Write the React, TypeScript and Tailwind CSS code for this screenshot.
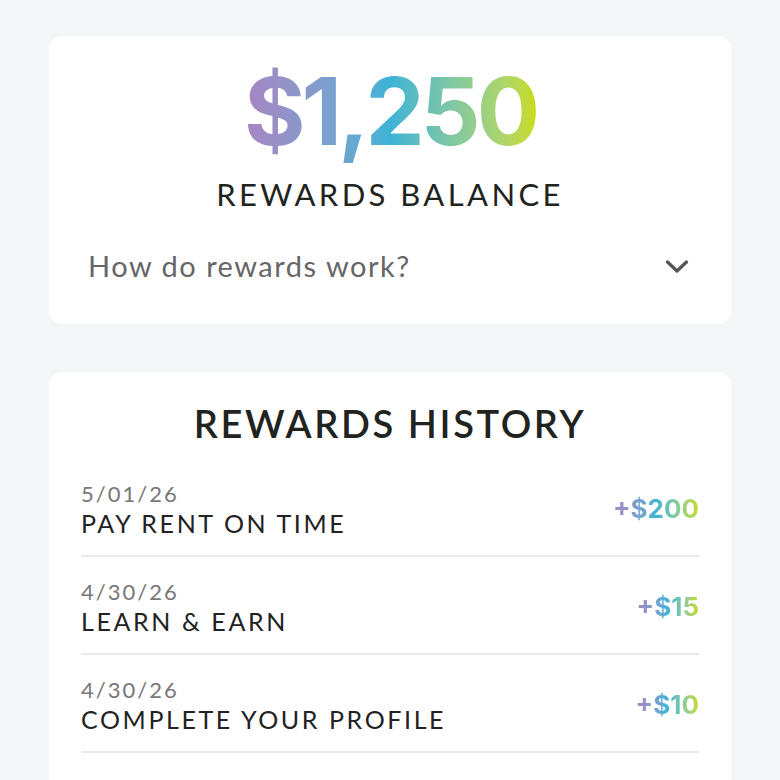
const history = [
  { date: "5/01/26", title: "PAY RENT ON TIME", amount: "+$200" },
  { date: "4/30/26", title: "LEARN & EARN", amount: "+$15" },
  { date: "4/30/26", title: "COMPLETE YOUR PROFILE", amount: "+$10" },
  { date: "4/30/26", title: "LINK YOUR BANK", amount: "+$25" },
];

const gradientText =
  "bg-gradient-to-r from-[#a684c2] via-[#3db3d6] to-[#c8dc0e] bg-clip-text text-transparent";

function Chevron() {
  return (
    <svg width="24" height="14" viewBox="0 0 24 14" fill="none" stroke="#555" strokeWidth="3.2" strokeLinecap="round" strokeLinejoin="round">
      <polyline points="2.5,2 12,11 21.5,2" />
    </svg>
  );
}

export default function App() {
  return (
    <div className="min-h-screen bg-[#f5f6f8] px-[49px] pt-9 font-['Lato',sans-serif]">
      {/* Balance card */}
      <section className="rounded-[13px] bg-white px-[39px] pb-[40px] pt-[24px]">
        <div className="flex justify-center">
          <span
            className={`${gradientText} font-['Inter',sans-serif] text-[94px] font-bold leading-[1.1] tracking-[-4px]`}
          >
            $1,250
          </span>
        </div>
        <h2 className="mt-[12px] text-center text-[31px] leading-tight tracking-[3.4px] text-[#1f2420]">
          REWARDS BALANCE
        </h2>
        <button className="mt-[34px] flex w-full items-center justify-between text-left">
          <span className="text-[29px] leading-[36px] tracking-[1.5px] text-[#666]">How do rewards work?</span>
          <span className="mr-[3px] mt-[2px]">
            <Chevron />
          </span>
        </button>
      </section>

      {/* History card */}
      <section className="mt-12 rounded-t-[13px] bg-white px-8 pt-[28px]">
        <h2 className="text-center text-[38px] font-semibold leading-tight tracking-[2.6px] text-[#1f2420]">
          REWARDS HISTORY
        </h2>
        <ul className="mt-[28px]">
          {history.map((item) => (
            <li
              key={item.title}
              className="mb-[17px] flex items-center justify-between border-b-2 border-[#e9e9e9] pb-[17px] pt-[4px]"
            >
              <div className="flex flex-col">
                <span className="text-[22px] leading-[28px] tracking-[2px] text-[#777]">{item.date}</span>
                <span className="text-[25px] leading-[30px] tracking-[2.6px] text-[#222]">{item.title}</span>
              </div>
              <span className={`${gradientText} font-['Inter',sans-serif] text-[26px] font-bold`}>
                {item.amount}
              </span>
            </li>
          ))}
        </ul>
      </section>
    </div>
  );
}
